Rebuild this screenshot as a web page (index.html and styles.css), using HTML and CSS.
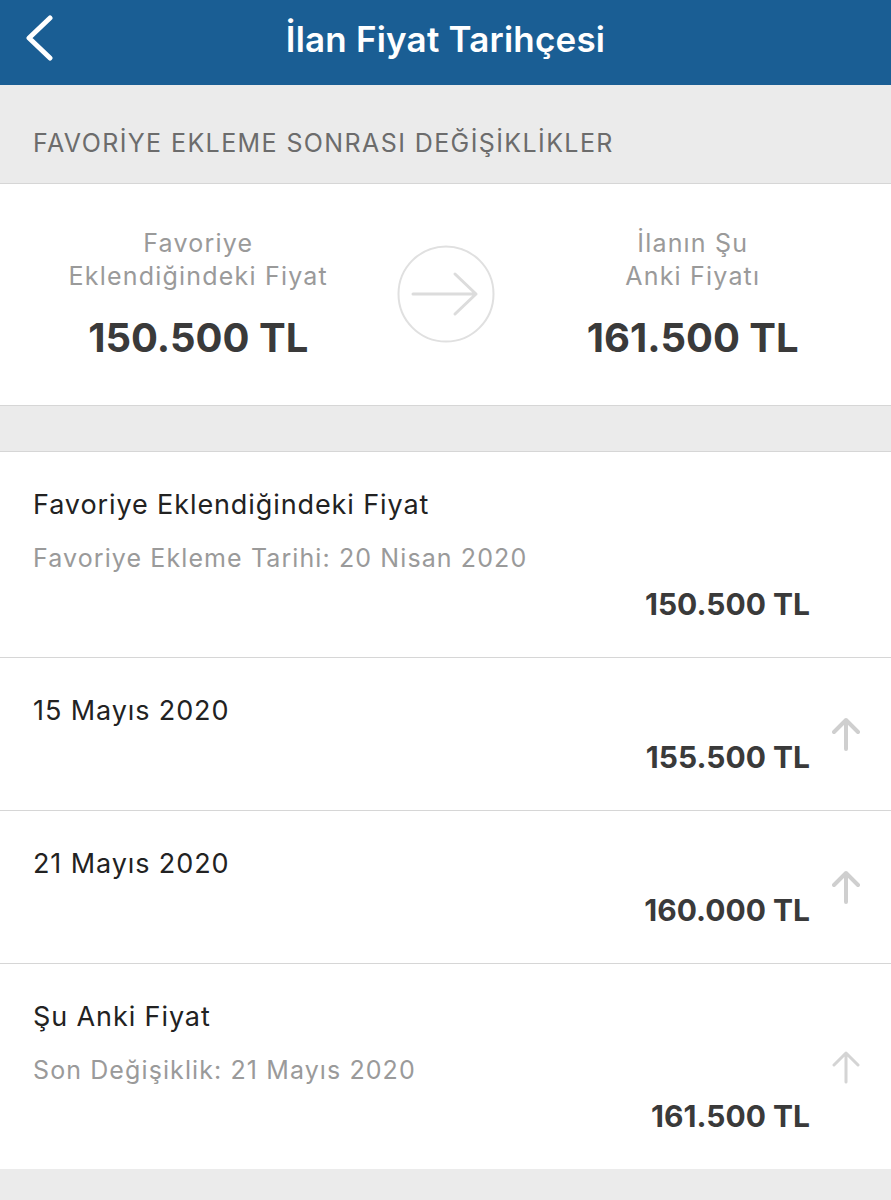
FILE: index.html
```html
<!DOCTYPE html>
<html lang="tr">
<head>
  <meta charset="UTF-8" />
  <meta name="viewport" content="width=device-width, initial-scale=1.0"/>
  <title>İlan Fiyat Tarihçesi</title>
  <link rel="stylesheet" href="styles.css">
</head>
<body>
  <header class="nav-bar">
    <a class="back" href="#" aria-label="Geri">
      <svg width="30" height="46" viewBox="0 0 30 46"><polyline points="25,3 4,23 25,43" fill="none" stroke="#fff" stroke-width="5" stroke-linecap="round" stroke-linejoin="round"/></svg>
    </a>
    <h1>İlan Fiyat Tarihçesi</h1>
  </header>

  <div class="section-head">FAVORİYE EKLEME SONRASI DEĞİŞİKLİKLER</div>

  <section class="summary">
    <div class="summary-col">
      <div class="summary-label">Favoriye<br>Eklendiğindeki Fiyat</div>
      <div class="summary-price">150.500 TL</div>
    </div>
    <div class="summary-arrow">
      <svg width="98" height="98" viewBox="0 0 98 98">
        <circle cx="49" cy="49" r="47.5" fill="none" stroke="#e0e0e0" stroke-width="2"/>
        <path d="M16 49 H79 M58 29 L79 49 L58 69" fill="none" stroke="#dcdcdc" stroke-width="3" stroke-linecap="round" stroke-linejoin="round"/>
      </svg>
    </div>
    <div class="summary-col">
      <div class="summary-label">İlanın Şu<br>Anki Fiyatı</div>
      <div class="summary-price">161.500 TL</div>
    </div>
  </section>

  <div class="spacer"></div>

  <ul class="history">
    <li class="row">
      <div class="row-body">
        <div class="row-title">Favoriye Eklendiğindeki Fiyat</div>
        <div class="row-sub">Favoriye Ekleme Tarihi: 20 Nisan 2020</div>
        <div class="row-price">150.500 TL</div>
      </div>
      <div class="row-icon"></div>
    </li>
    <li class="row">
      <div class="row-body">
        <div class="row-title">15 Mayıs 2020</div>
        <div class="row-price">155.500 TL</div>
      </div>
      <div class="row-icon">
        <svg width="28" height="34" viewBox="0 0 28 34"><path d="M14 32 V3 M2 15 L14 3 L26 15" fill="none" stroke="#cfcfcf" stroke-width="4" stroke-linecap="round" stroke-linejoin="round"/></svg>
      </div>
    </li>
    <li class="row">
      <div class="row-body">
        <div class="row-title">21 Mayıs 2020</div>
        <div class="row-price">160.000 TL</div>
      </div>
      <div class="row-icon">
        <svg width="28" height="34" viewBox="0 0 28 34"><path d="M14 32 V3 M2 15 L14 3 L26 15" fill="none" stroke="#cfcfcf" stroke-width="4" stroke-linecap="round" stroke-linejoin="round"/></svg>
      </div>
    </li>
    <li class="row">
      <div class="row-body">
        <div class="row-title">Şu Anki Fiyat</div>
        <div class="row-sub">Son Değişiklik: 21 Mayıs 2020</div>
        <div class="row-price">161.500 TL</div>
      </div>
      <div class="row-icon">
        <svg width="28" height="34" viewBox="0 0 28 34"><path d="M14 32 V3 M2 15 L14 3 L26 15" fill="none" stroke="#d4d4d4" stroke-width="3" stroke-linecap="round" stroke-linejoin="round"/></svg>
      </div>
    </li>
  </ul>
</body>
</html>
```

FILE: styles.css
```css
/* Base */
body { margin:0; font-family:Inter, Roboto, "Liberation Sans", sans-serif; background:#ebebeb; color:#222; }
ul { list-style:none; margin:0; padding:0; }
/* Nav bar */
.nav-bar { position:relative; height:85px; background:#1a5e94; display:flex; align-items:center; justify-content:center; }
.nav-bar h1 { margin:0; font-size:35px; font-weight:600; color:#fff; line-height:40px; padding-bottom:8px; letter-spacing:0.2px; }
.back { position:absolute; left:25px; top:15px; display:block; }
/* Section header */
.section-head { padding:44px 33px 26px; font-size:25px; line-height:28px; letter-spacing:1.4px; color:#6c6c6c; border-bottom:1px solid #d6d6d6; }
/* Summary */
.summary { display:grid; grid-template-columns:1fr auto 1fr; align-items:center; background:#fff; padding:43px 0 44px; border-bottom:1px solid #d6d6d6; }
.summary-col { text-align:center; }
.summary-label { font-size:25px; line-height:33px; letter-spacing:1.2px; color:#9a9a9a; }
.summary-price { margin-top:22px; font-size:40px; line-height:46px; font-weight:700; color:#3a3a3a; }
.summary-arrow svg { display:block; }
.spacer { height:45px; border-bottom:1px solid #d6d6d6; }
/* History rows */
.row { display:flex; align-items:center; background:#fff; border-bottom:1px solid #d6d6d6; padding:0 31px 0 33px; }
.row-body { flex:1; padding:35px 0 35px; }
.row-title { font-size:27px; line-height:36px; letter-spacing:0.9px; color:#222; }
.row-sub { margin-top:17px; font-size:25px; line-height:36px; letter-spacing:1.1px; color:#9a9a9a; }
.row-price { margin-top:10px; text-align:right; font-size:30px; line-height:36px; font-weight:700; color:#3a3a3a; }
.row-icon { width:28px; margin-left:22px; }
.row-icon svg { display:block; }
.history .row:last-child { border-bottom:none; }
```
